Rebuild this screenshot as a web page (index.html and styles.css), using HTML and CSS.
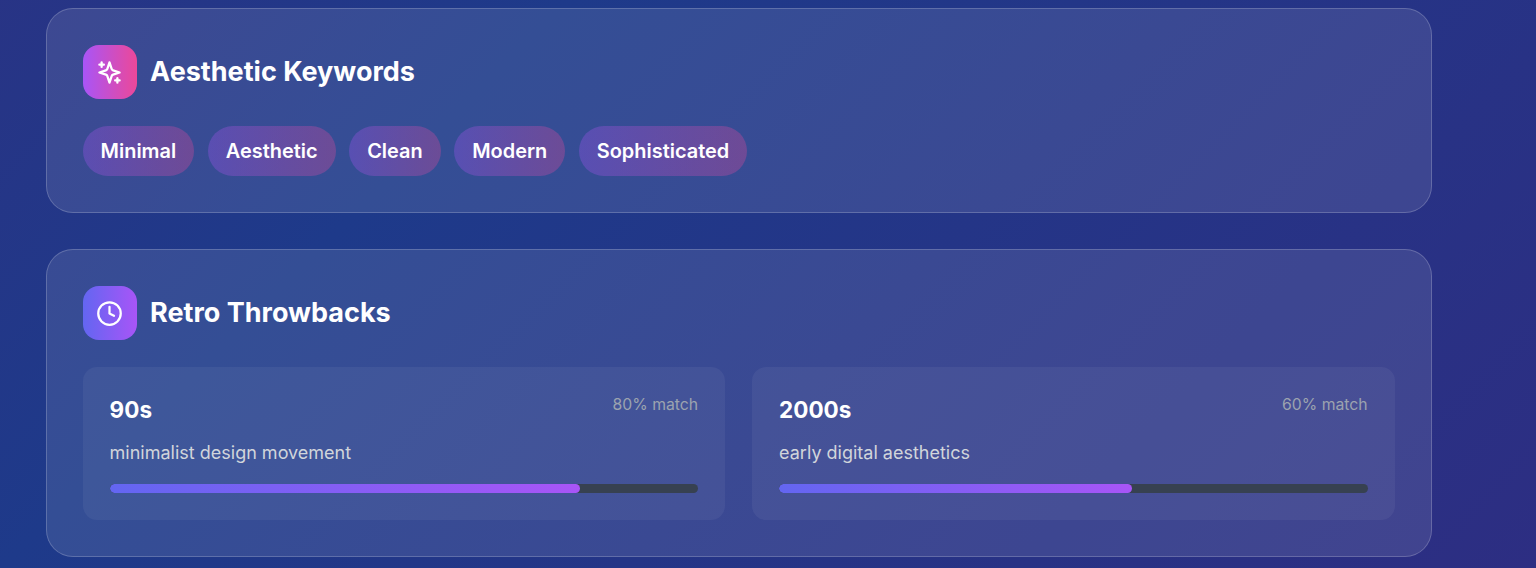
FILE: index.html
```html
<!DOCTYPE html>
<html lang="en">
<head>
  <meta charset="UTF-8" />
  <meta name="viewport" content="width=device-width, initial-scale=1.0" />
  <title>Style Report</title>
  <link rel="stylesheet" href="styles.css">
</head>
<body>
  <main class="report">
    <section class="panel">
      <header class="panel-head">
        <div class="panel-icon icon-pink">
          <svg viewBox="0 0 24 24" fill="none" stroke="currentColor" stroke-width="2" stroke-linecap="round" stroke-linejoin="round">
            <path d="m12 3-1.912 5.813a2 2 0 0 1-1.275 1.275L3 12l5.813 1.912a2 2 0 0 1 1.275 1.275L12 21l1.912-5.813a2 2 0 0 1 1.275-1.275L21 12l-5.813-1.912a2 2 0 0 1-1.275-1.275L12 3Z"/>
            <path d="M5 3v4"/>
            <path d="M19 17v4"/>
            <path d="M3 5h4"/>
            <path d="M17 19h4"/>
          </svg>
        </div>
        <h2>Aesthetic Keywords</h2>
      </header>
      <div class="tags">
        <span class="tag">Minimal</span>
        <span class="tag">Aesthetic</span>
        <span class="tag">Clean</span>
        <span class="tag">Modern</span>
        <span class="tag">Sophisticated</span>
      </div>
    </section>

    <section class="panel">
      <header class="panel-head">
        <div class="panel-icon icon-violet">
          <svg viewBox="0 0 24 24" fill="none" stroke="currentColor" stroke-width="2" stroke-linecap="round" stroke-linejoin="round">
            <circle cx="12" cy="12" r="10"/>
            <path d="M12 6v6l4 2"/>
          </svg>
        </div>
        <h2>Retro Throwbacks</h2>
      </header>
      <div class="eras">
        <article class="era">
          <div class="era-top">
            <h3>90s</h3>
            <span class="era-match">80% match</span>
          </div>
          <p>minimalist design movement</p>
          <div class="bar"><div class="bar-fill" style="width: 80%"></div></div>
        </article>
        <article class="era">
          <div class="era-top">
            <h3>2000s</h3>
            <span class="era-match">60% match</span>
          </div>
          <p>early digital aesthetics</p>
          <div class="bar"><div class="bar-fill" style="width: 60%"></div></div>
        </article>
      </div>
    </section>
  </main>
</body>
</html>
```

FILE: styles.css
```css
* {
  box-sizing: border-box;
}
html, body {
  height: 100%;
}
body {
  margin: 0;
  overflow: hidden;
  font-family: Inter, "Noto Sans", sans-serif;
  color: #fff;
  background: linear-gradient(135deg, #312e81 -25%, #1e3a8a 27%, #2e2d82 105%);
}
.report {
  display: flex;
  flex-direction: column;
  gap: 36px;
  padding: 8px 104.4px 0 45.6px;
}
.panel {
  padding: 36px;
  border: 1px solid rgba(255, 255, 255, 0.2);
  border-radius: 27px;
  background: rgba(255, 255, 255, 0.1);
}
.panel-head {
  display: flex;
  align-items: center;
  gap: 13.5px;
  margin-bottom: 27px;
}
.panel-icon {
  display: flex;
  align-items: center;
  justify-content: center;
  width: 54px;
  height: 54px;
  border-radius: 16px;
}
.panel-icon svg {
  width: 27px;
  height: 27px;
}
.icon-pink {
  background: linear-gradient(90deg, #a855f7, #ec4899);
}
.icon-violet {
  background: linear-gradient(90deg, #6366f1, #a855f7);
}
h2 {
  margin: 0;
  font-size: 27px;
  font-weight: 700;
  line-height: 40.5px;
}
.tags {
  display: flex;
  flex-wrap: wrap;
  gap: 13.5px;
}
.tag {
  padding: 13px 18px;
  border-radius: 25px;
  font-size: 19.95px;
  font-weight: 600;
  line-height: 24px;
  background: linear-gradient(90deg, rgba(99, 102, 241, 0.3), rgba(168, 85, 247, 0.3) 0%, rgba(236, 72, 153, 0.3));
}
.eras {
  display: grid;
  grid-template-columns: 1fr 1fr;
  gap: 27px;
}
.era {
  padding: 27px;
  border-radius: 14px;
  background: rgba(255, 255, 255, 0.05);
}
.era-top {
  display: flex;
  align-items: flex-start;
  justify-content: space-between;
}
h3 {
  margin: 0;
  font-size: 22.5px;
  font-weight: 700;
  line-height: 32.5px;
}
.era-match {
  font-size: 15.75px;
  line-height: 22px;
  color: #9ca3af;
}
.era p {
  margin: 12.5px 0 0;
  font-size: 18px;
  line-height: 27px;
  color: #d1d5db;
}
.bar {
  height: 9px;
  margin-top: 18px;
  border-radius: 5px;
  background: #374151;
  overflow: hidden;
}
.bar-fill {
  height: 100%;
  border-radius: 5px;
  background: linear-gradient(90deg, #6366f1, #a855f7);
}
```
